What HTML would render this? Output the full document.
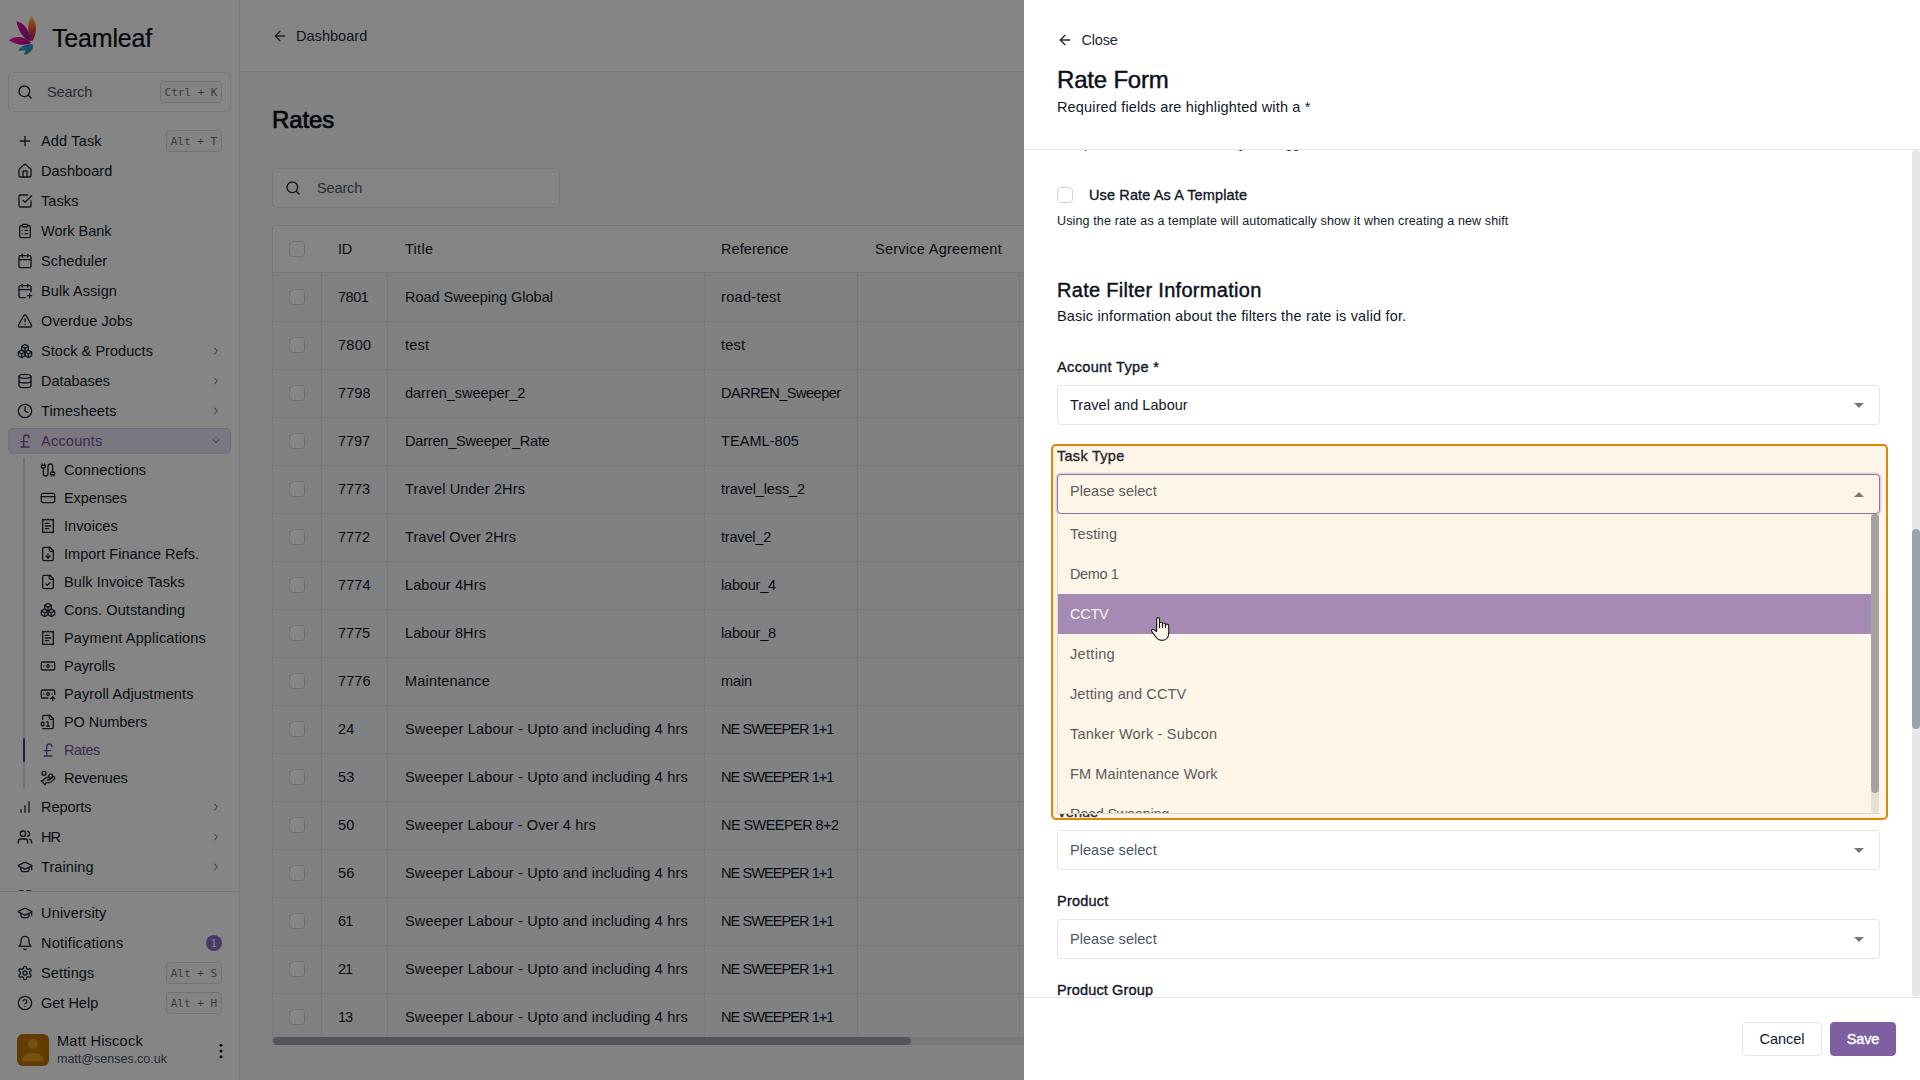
<!DOCTYPE html>
<html lang="en"><head><meta charset="utf-8"><title>Teamleaf - Rates</title>
<style>*{box-sizing:border-box;margin:0;padding:0}
html,body{width:1920px;height:1080px;overflow:hidden;background:#fff}
body{font-family:"Liberation Sans",sans-serif;font-size:14.500px;color:#111827;-webkit-font-smoothing:antialiased;letter-spacing:.16px}
#app{position:relative;width:1920px;height:1080px;overflow:hidden}
svg{display:block;flex:none}
/* sidebar */
#side{position:absolute;left:0;top:0;width:240px;height:1080px;background:#fefefe;border-right:1px solid #e5e7eb}
.brand{position:absolute;left:4px;top:10px;height:50px;display:flex;align-items:center}
.bname{margin-left:8px;font-size:25px;font-weight:400;color:#0b0f1a;position:relative;top:3px;-webkit-text-stroke:.2px #0b0f1a}
.sbox{position:absolute;left:8px;top:72px;width:223px;height:40px;border:1px solid #e5e7eb;border-radius:5px;background:#fdfdfd;display:flex;align-items:center;padding:0 8px 0 8px;color:#4b5563}
.sbox .sic{color:#111827}
.sph{margin-left:14px;flex:1;font-size:14.500px;color:#4b5563}
.kbd{font-family:"DejaVu Sans Mono","Liberation Mono",monospace;font-size:11px;color:#6b7280;border:1px solid #d8dbe0;border-radius:4px;background:#f9fafb;height:22px;line-height:21px;padding:0 3.500px;letter-spacing:0}
#nav{position:absolute;left:0;top:126px;width:239px;height:765px;overflow:hidden}
.ni{position:relative;height:30px;margin:0 8px;padding:0 9px 0 9px;display:flex;align-items:center;color:#111827;border-radius:5px}
.ni .ic{color:#1f2937}
.nl{margin-left:8px;flex:1;font-size:14.500px}
.ni .chev{color:#4b5563;margin-right:.500px}
.ni.act{height:26px;margin-top:2px;margin-bottom:1px;background:#e9e3f3;border:1px solid #d9cfea;color:#76509c;padding-left:8px;padding-right:8px}
.ni.act .ic,.ni.act .chev{color:#76509c}
.sub{position:relative;margin-left:24px;padding:1px 0 0 0;height:337px;margin-bottom:0}
.sub:before{content:"";position:absolute;left:-1px;top:3px;bottom:3px;width:2px;background:#dcd9e4}
.si{height:28px;display:flex;align-items:center;padding-left:16px;color:#111827;position:relative}
.si .ic{color:#1f2937}
.si>span{margin-left:8px}
.si.cur{color:#76509c}
.si.cur .ic{color:#76509c}
.si.cur:before{content:"";position:absolute;left:-1px;top:2px;width:2px;height:24px;background:#4c2a85;border-radius:1px;z-index:1}
#sbot{position:absolute;left:0;top:891px;width:239px;height:189px;border-top:1px solid #e2e4e8;padding-top:6px;background:#fefefe}
.badge{width:16px;height:16px;border-radius:50%;background:#8e6cc8;color:#fff;font-size:11px;line-height:16px;text-align:center;margin-right:0}
.user{position:absolute;left:17px;top:142px;display:flex;align-items:flex-start;width:214px}
.av{width:32px;height:32px;border-radius:6px;background:#b87000;overflow:hidden}
.ut{margin-left:8px;flex:1}
.un{font-size:14.500px;line-height:16px;color:#111827;margin-top:-1px}
.ue{font-size:12.500px;line-height:16px;color:#4b5563;margin-top:2px}
.dots{color:#111827;margin-right:2px;align-self:center}
/* main */
#main{position:absolute;left:240px;top:0;width:1680px;height:1080px;background:#f8f9fb}
.mhead{position:absolute;left:0;top:0;width:1680px;height:72px;border-bottom:1px solid #e5e7eb;display:flex;align-items:center;padding-left:32px;color:#374151;background:#fefefe}
.mhead>span{margin-left:8px;font-size:14.500px;color:#1f2937}
.ptitle{position:absolute;left:32px;top:105px;font-size:24px;line-height:30px;font-weight:400;-webkit-text-stroke:.7px #0b0f1a;color:#0b0f1a;letter-spacing:.2px}
.msearch{position:absolute;left:32px;top:168px;width:288px;height:40px;border:1px solid #e2e5ea;border-radius:5px;background:#fbfbfc;display:flex;align-items:center;padding-left:12px;color:#4b5563}
.msearch .ic{color:#1f2937}
.msearch>span{margin-left:16px}
.table{position:absolute;left:32px;top:225px;width:1500px;border:1px solid #e2e5ea;border-radius:3px 0 0 0;background:#f4f5f8}
.tr{display:flex;height:48px;border-bottom:1px solid #e2e5ea}
.tr.th{height:47px;background:#fefefe;border-radius:3px 0 0 0}
.tr.th+.tr{height:49px}
.c{display:flex;align-items:center;padding-left:17px;border-right:1px solid #e2e5ea;white-space:nowrap;font-size:14.500px;color:#111827}
.th .c{border-right-color:transparent}
.c0{width:49px;padding-left:16px}.c1{width:66px;padding-left:16px;letter-spacing:-.3px}.c2{width:317px}.c3{width:153px;padding-left:16px}.c4{width:162px}.c5{width:300px}
.cb{display:block;width:16px;height:16px;border:1px solid #d1d5db;border-radius:4px;background:#fff}
.hscroll{position:absolute;left:33px;top:1037px;width:800px;height:8px;background:#e5e7eb}
.hscroll i{display:block;width:638px;height:8px;border-radius:4px;background:#9ca3af}
#ov{z-index:5;position:absolute;left:0;top:0;width:1024px;height:1080px;background:rgba(0,0,0,.475)}
/* panel */
#panel{z-index:6;position:absolute;left:1024px;top:0;width:896px;height:1080px;background:#fff}
.phead{position:absolute;left:0;top:0;width:896px;height:150px;border-bottom:1px solid #e5e7eb;padding-left:33px}
.close{position:absolute;left:33px;top:31px;height:18px;display:flex;align-items:center;color:#1f2937}
.close>span{margin-left:8.400px;font-size:14.500px}
.phead h2{position:absolute;left:33px;top:65px;font-size:24px;line-height:30px;letter-spacing:0;font-weight:400;-webkit-text-stroke:.45px #0b0f1a;color:#0b0f1a}
.phead p{position:absolute;left:33px;top:98px;font-size:14.500px;line-height:18px;color:#111827}
.pbody{position:absolute;left:0;top:150px;width:896px;height:847px;overflow:hidden}
.pbody>*{position:absolute}
.clip{left:35px;top:-14px;font-size:13px;line-height:16px;color:#111827;letter-spacing:.15px}
.chk{left:33px;top:37px;display:flex;align-items:center}
.chk>span{margin-left:16px;font-weight:400;-webkit-text-stroke:.35px #111827;font-size:14.500px}
.desc{left:33px;top:63px;font-size:12.500px;line-height:16px;color:#111827}
.pbody h3{left:33px;top:127px;font-size:20px;line-height:26px;letter-spacing:.32px;font-weight:400;-webkit-text-stroke:.4px #0b0f1a;color:#0b0f1a}
.sdesc{left:33px;top:157px;font-size:14.500px;line-height:18px}
.lb{left:33px;font-weight:400;-webkit-text-stroke:.35px #111827;font-size:14.500px;line-height:18px;margin-top:-151px;white-space:nowrap}
.sel{left:33px;width:823px;height:40px;margin-top:-150px;border:1px solid #e2e5ea;border-radius:4px;background:#fff;display:flex;align-items:center;padding:0 15px 0 12px;color:#4b5563}
.sel>span{flex:1;font-size:14.500px}
.sel .v{color:#111827}
.ad{width:0;height:0;border:5px solid transparent;border-top:5px solid #777;border-bottom:0}
.au{width:0;height:0;border:5px solid transparent;border-bottom:5px solid #777;border-top:0}
.sel.open{border-color:#8b6bb5;box-shadow:0 0 0 1.500px rgba(139,107,181,.25)}
.dd{left:33px;top:364px;width:823px;height:300px;background:#fff;border:1px solid #dcdcdc;border-top:0;border-right:0;overflow:hidden}
.ddin{position:absolute;left:0;top:0;width:813px}
.opt{height:40px;line-height:40px;padding-left:12px;font-size:14.500px;color:#4b5563}
.opt.hl{background:#9d8ac5;color:#fff}
.ddtrack{position:absolute;right:1px;top:0;width:8px;height:299px;background:#e5e7eb;border-radius:0 0 4px 4px}
.ddtrack i{display:block;width:8px;height:279px;background:#9ca3af;border-radius:4px}
.hlbox{left:27px;top:294px;width:837px;height:376px;border:2px solid #e08600;border-radius:5px;background:rgba(240,160,30,.1)}
.vtrack{left:888px;top:0;width:8px;height:847px;background:#e5e7eb;border-radius:4px}
.vtrack i{display:block;margin-top:379px;width:8px;height:200px;background:#9ca3af;border-radius:4px}
.pfoot{position:absolute;left:0;top:997px;width:896px;height:83px;border-top:1px solid #e5e7eb;background:#fff}
.btn{position:absolute;top:24px;height:34px;line-height:32px;border:1px solid #e2e5ea;border-radius:4px;font-size:14.500px;text-align:center;color:#111827}
.btn{left:718px;width:80px}
.btn.pri{left:806px;width:66px;background:#7e5fa2;border-color:#7e5fa2;color:#fff;-webkit-text-stroke:.35px #fff}
.cursor{position:absolute;left:116px;top:605px}

.tr+.tr+.tr .c>*{position:relative;top:-1px}
.sel.open>span{position:relative;top:-3px}
.ni .kbd{padding:0 4px}
</style></head><body>
<div id="app">
<aside id="side">
 <div class="brand"><svg class="logo" width="40" height="50" viewBox="4 10 40 50">
  <defs><linearGradient id="g1" x1="0" y1="0" x2="0" y2="1"><stop offset="0" stop-color="#ffd83a"/><stop offset=".45" stop-color="#ee5a2a"/><stop offset="1" stop-color="#c00c5c"/></linearGradient>
  <linearGradient id="g2" x1="0" y1="0" x2="1" y2="1"><stop offset="0" stop-color="#f0069c"/><stop offset="1" stop-color="#7a1c8c"/></linearGradient>
  <linearGradient id="g3" x1="0" y1="0" x2="1" y2="0"><stop offset="0" stop-color="#ff14b4"/><stop offset="1" stop-color="#a80478"/></linearGradient>
  <linearGradient id="g4" x1="0" y1="1" x2="1" y2="0"><stop offset="0" stop-color="#1cb4e4"/><stop offset="1" stop-color="#2c6cc4"/></linearGradient>
  <linearGradient id="g5" x1="0" y1="1" x2="1" y2="0"><stop offset="0" stop-color="#0ea486"/><stop offset="1" stop-color="#2494cc"/></linearGradient></defs>
  <path d="M31.500 16C27.300 22 26.800 33 32 41.500 37.200 34 37.700 24 31.500 16Z" fill="url(#g1)"/>
  <path d="M16.500 21.300C23.500 22.300 29.500 30 31.300 41.500 24 39.700 18.300 31.500 16.500 21.300Z" fill="url(#g2)"/>
  <path d="M9.100 40.300C15 35.300 24.500 35.800 31.300 43 25 45.800 15.500 45.300 9.100 40.300Z" fill="url(#g3)"/>
  <path d="M17.900 50.500C21 46 27 43.800 32.200 44.200 30.500 48.700 25 51.700 17.900 50.500Z" fill="url(#g4)"/>
  <path d="M24.100 54.700C25 50 28.500 46 32.700 44.500 34.200 48.200 31 53.700 24.100 54.700Z" fill="url(#g5)"/>
  <path d="M31.800 41 27 29M31 42.800 18 40M31.600 44.600 22 49M32.300 45 27 52" stroke="#fff" stroke-opacity=".35" stroke-width=".4" fill="none"/>
 </svg><span class="bname"><span style="letter-spacing:-0.180px">Teamleaf</span></span></div>
 <div class="sbox"><svg class="ic sic" width="16" height="16" viewBox="0 0 24 24" fill="none" stroke="currentColor" stroke-width="2" stroke-linecap="round" stroke-linejoin="round" ><circle cx="11" cy="11" r="8"/><path d="m21 21-4.300-4.300"/></svg><span class="sph"><span style="letter-spacing:-0.141px">Search</span></span><span class="kbd">Ctrl + K</span></div>
 <nav id="nav"><div class="ni "><svg class="ic" width="16" height="16" viewBox="0 0 24 24" fill="none" stroke="currentColor" stroke-width="2" stroke-linecap="round" stroke-linejoin="round" ><path d="M5 12h14"/><path d="M12 5v14"/></svg><span class="nl"><span style="letter-spacing:0.171px">Add Task</span></span><span class="kbd">Alt + T</span></div><div class="ni "><svg class="ic" width="16" height="16" viewBox="0 0 24 24" fill="none" stroke="currentColor" stroke-width="2" stroke-linecap="round" stroke-linejoin="round" ><path d="M15 21v-8a1 1 0 0 0-1-1h-4a1 1 0 0 0-1 1v8"/><path d="M3 10a2 2 0 0 1 .709-1.528l7-5.999a2 2 0 0 1 2.582 0l7 5.999A2 2 0 0 1 21 10v9a2 2 0 0 1-2 2H5a2 2 0 0 1-2-2z"/></svg><span class="nl"><span style="letter-spacing:0.035px">Dashboard</span></span></div><div class="ni "><svg class="ic" width="16" height="16" viewBox="0 0 24 24" fill="none" stroke="currentColor" stroke-width="2" stroke-linecap="round" stroke-linejoin="round" ><path d="m9 11 3 3L22 4"/><path d="M21 12v7a2 2 0 0 1-2 2H5a2 2 0 0 1-2-2V5a2 2 0 0 1 2-2h11"/></svg><span class="nl"><span style="letter-spacing:0.087px">Tasks</span></span></div><div class="ni "><svg class="ic" width="16" height="16" viewBox="0 0 24 24" fill="none" stroke="currentColor" stroke-width="2" stroke-linecap="round" stroke-linejoin="round" ><rect width="8" height="4" x="8" y="2" rx="1" ry="1"/><path d="M16 4h2a2 2 0 0 1 2 2v14a2 2 0 0 1-2 2H6a2 2 0 0 1-2-2V6a2 2 0 0 1 2-2h2"/><path d="M12 11h4"/><path d="M12 16h4"/><path d="M8 11h.01"/><path d="M8 16h.01"/></svg><span class="nl"><span style="letter-spacing:-0.016px">Work Bank</span></span></div><div class="ni "><svg class="ic" width="16" height="16" viewBox="0 0 24 24" fill="none" stroke="currentColor" stroke-width="2" stroke-linecap="round" stroke-linejoin="round" ><path d="M8 2v4"/><path d="M16 2v4"/><rect width="18" height="18" x="3" y="4" rx="2"/><path d="M3 10h18"/></svg><span class="nl"><span style="letter-spacing:0.106px">Scheduler</span></span></div><div class="ni "><svg class="ic" width="16" height="16" viewBox="0 0 24 24" fill="none" stroke="currentColor" stroke-width="2" stroke-linecap="round" stroke-linejoin="round" ><path d="M8 2v4"/><path d="M16 2v4"/><path d="M21 13V6a2 2 0 0 0-2-2H5a2 2 0 0 0-2 2v14a2 2 0 0 0 2 2h8"/><path d="M3 10h18"/><path d="M16 19h6"/><path d="M19 16v6"/></svg><span class="nl"><span style="letter-spacing:0.095px">Bulk Assign</span></span></div><div class="ni "><svg class="ic" width="16" height="16" viewBox="0 0 24 24" fill="none" stroke="currentColor" stroke-width="2" stroke-linecap="round" stroke-linejoin="round" ><path d="m21.73 18-8-14a2 2 0 0 0-3.48 0l-8 14A2 2 0 0 0 4 21h16a2 2 0 0 0 1.73-3"/><path d="M12 9v4"/><path d="M12 17h.01"/></svg><span class="nl"><span style="letter-spacing:0.102px">Overdue Jobs</span></span></div><div class="ni "><svg class="ic" width="16" height="16" viewBox="0 0 24 24" fill="none" stroke="currentColor" stroke-width="2" stroke-linecap="round" stroke-linejoin="round" ><path d="M2.970 12.920A2 2 0 0 0 2 14.630v3.240a2 2 0 0 0 .970 1.710l3 1.800a2 2 0 0 0 2.060 0L12 19v-5.500l-5-3-4.030 2.420Z"/><path d="m7 16.500-4.740-2.850"/><path d="m7 16.500 5-3"/><path d="M7 16.500v5.170"/><path d="M12 13.500V19l3.970 2.380a2 2 0 0 0 2.060 0l3-1.800a2 2 0 0 0 .970-1.710v-3.240a2 2 0 0 0-.970-1.710L17 10.500l-5 3Z"/><path d="m17 16.500-5-3"/><path d="m17 16.500 4.740-2.850"/><path d="M17 16.500v5.170"/><path d="M7.970 4.420A2 2 0 0 0 7 6.130v4.370l5 3 5-3V6.130a2 2 0 0 0-.970-1.710l-3-1.800a2 2 0 0 0-2.060 0l-3 1.800Z"/><path d="M12 8 7.260 5.150"/><path d="m12 8 4.740-2.850"/><path d="M12 13.500V8"/></svg><span class="nl"><span style="letter-spacing:0.049px">Stock &amp; Products</span></span><svg class="chev" width="12" height="12" viewBox="0 0 24 24" fill="none" stroke="currentColor" stroke-width="2" stroke-linecap="round" stroke-linejoin="round" ><path d="m9 18 6-6-6-6"/></svg></div><div class="ni "><svg class="ic" width="16" height="16" viewBox="0 0 24 24" fill="none" stroke="currentColor" stroke-width="2" stroke-linecap="round" stroke-linejoin="round" ><ellipse cx="12" cy="5" rx="9" ry="3"/><path d="M3 5V19A9 3 0 0 0 21 19V5"/><path d="M3 12A9 3 0 0 0 21 12"/></svg><span class="nl"><span style="letter-spacing:-0.036px">Databases</span></span><svg class="chev" width="12" height="12" viewBox="0 0 24 24" fill="none" stroke="currentColor" stroke-width="2" stroke-linecap="round" stroke-linejoin="round" ><path d="m9 18 6-6-6-6"/></svg></div><div class="ni "><svg class="ic" width="16" height="16" viewBox="0 0 24 24" fill="none" stroke="currentColor" stroke-width="2" stroke-linecap="round" stroke-linejoin="round" ><circle cx="12" cy="12" r="10"/><polyline points="12 6 12 12 16 14"/></svg><span class="nl"><span style="letter-spacing:0.110px">Timesheets</span></span><svg class="chev" width="12" height="12" viewBox="0 0 24 24" fill="none" stroke="currentColor" stroke-width="2" stroke-linecap="round" stroke-linejoin="round" ><path d="m9 18 6-6-6-6"/></svg></div><div class="ni act"><svg class="ic" width="16" height="16" viewBox="0 0 24 24" fill="none" stroke="currentColor" stroke-width="2" stroke-linecap="round" stroke-linejoin="round" ><path d="M18 7c0-5.333-8-5.333-8 0"/><path d="M10 7v14"/><path d="M6 21h12"/><path d="M6 13h10"/></svg><span class="nl"><span style="letter-spacing:0.232px">Accounts</span></span><svg class="chev" width="12" height="12" viewBox="0 0 24 24" fill="none" stroke="currentColor" stroke-width="2" stroke-linecap="round" stroke-linejoin="round" ><path d="m6 9 6 6 6-6"/></svg></div><div class="sub"><div class="si"><svg class="ic" width="16" height="16" viewBox="0 0 24 24" fill="none" stroke="currentColor" stroke-width="2" stroke-linecap="round" stroke-linejoin="round" ><path d="M17 21v-2a1 1 0 0 1-1-1v-1a2 2 0 0 1 2-2h2a2 2 0 0 1 2 2v1a1 1 0 0 1-1 1"/><path d="M19 15V6.500a1 1 0 0 0-7 0v11a1 1 0 0 1-7 0V9"/><path d="M21 21v-2h-4"/><path d="M3 5h4V3"/><path d="M7 5a1 1 0 0 1 1 1v1a2 2 0 0 1-2 2H4a2 2 0 0 1-2-2V6a1 1 0 0 1 1-1V3"/></svg><span style="letter-spacing:0.149px">Connections</span></div><div class="si"><svg class="ic" width="16" height="16" viewBox="0 0 24 24" fill="none" stroke="currentColor" stroke-width="2" stroke-linecap="round" stroke-linejoin="round" ><rect width="20" height="14" x="2" y="5" rx="2"/><line x1="2" x2="22" y1="10" y2="10"/></svg><span style="letter-spacing:-0.085px">Expenses</span></div><div class="si"><svg class="ic" width="16" height="16" viewBox="0 0 24 24" fill="none" stroke="currentColor" stroke-width="2" stroke-linecap="round" stroke-linejoin="round" ><path d="M4 2v20l2-1 2 1 2-1 2 1 2-1 2 1 2-1 2 1V2l-2 1-2-1-2 1-2-1-2 1-2-1-2 1Z"/><path d="M14 8H8"/><path d="M16 12H8"/><path d="M13 16H8"/></svg><span style="letter-spacing:0.070px">Invoices</span></div><div class="si"><svg class="ic" width="16" height="16" viewBox="0 0 24 24" fill="none" stroke="currentColor" stroke-width="2" stroke-linecap="round" stroke-linejoin="round" ><path d="M15 2H6a2 2 0 0 0-2 2v16a2 2 0 0 0 2 2h12a2 2 0 0 0 2-2V7Z"/><path d="M14 2v4a2 2 0 0 0 2 2h4"/><path d="M12 18v-6"/><path d="m9 15 3 3 3-3"/></svg><span style="letter-spacing:0.021px">Import Finance Refs.</span></div><div class="si"><svg class="ic" width="16" height="16" viewBox="0 0 24 24" fill="none" stroke="currentColor" stroke-width="2" stroke-linecap="round" stroke-linejoin="round" ><path d="M15 2H6a2 2 0 0 0-2 2v16a2 2 0 0 0 2 2h12a2 2 0 0 0 2-2V7Z"/><path d="M14 2v4a2 2 0 0 0 2 2h4"/><path d="m9 15 2 2 4-4"/></svg><span style="letter-spacing:0.097px">Bulk Invoice Tasks</span></div><div class="si"><svg class="ic" width="16" height="16" viewBox="0 0 24 24" fill="none" stroke="currentColor" stroke-width="2" stroke-linecap="round" stroke-linejoin="round" ><path d="M2.970 12.920A2 2 0 0 0 2 14.630v3.240a2 2 0 0 0 .970 1.710l3 1.800a2 2 0 0 0 2.060 0L12 19v-5.500l-5-3-4.030 2.420Z"/><path d="m7 16.500-4.740-2.850"/><path d="m7 16.500 5-3"/><path d="M7 16.500v5.170"/><path d="M12 13.500V19l3.970 2.380a2 2 0 0 0 2.060 0l3-1.800a2 2 0 0 0 .970-1.710v-3.240a2 2 0 0 0-.970-1.710L17 10.500l-5 3Z"/><path d="m17 16.500-5-3"/><path d="m17 16.500 4.740-2.850"/><path d="M17 16.500v5.170"/><path d="M7.970 4.420A2 2 0 0 0 7 6.130v4.370l5 3 5-3V6.130a2 2 0 0 0-.970-1.710l-3-1.800a2 2 0 0 0-2.060 0l-3 1.800Z"/><path d="M12 8 7.260 5.150"/><path d="m12 8 4.740-2.850"/><path d="M12 13.500V8"/></svg><span style="letter-spacing:0.068px">Cons. Outstanding</span></div><div class="si"><svg class="ic" width="16" height="16" viewBox="0 0 24 24" fill="none" stroke="currentColor" stroke-width="2" stroke-linecap="round" stroke-linejoin="round" ><path d="M4 2v20l2-1 2 1 2-1 2 1 2-1 2 1 2-1 2 1V2l-2 1-2-1-2 1-2-1-2 1-2-1-2 1Z"/><path d="M14 8H8"/><path d="M16 12H8"/><path d="M13 16H8"/></svg><span style="letter-spacing:0.168px">Payment Applications</span></div><div class="si"><svg class="ic" width="16" height="16" viewBox="0 0 24 24" fill="none" stroke="currentColor" stroke-width="2" stroke-linecap="round" stroke-linejoin="round" ><rect width="20" height="12" x="2" y="6" rx="2"/><circle cx="12" cy="12" r="2"/><path d="M6 12h.01M18 12h.01"/></svg><span style="letter-spacing:-0.040px">Payrolls</span></div><div class="si"><svg class="ic" width="16" height="16" viewBox="0 0 24 24" fill="none" stroke="currentColor" stroke-width="2" stroke-linecap="round" stroke-linejoin="round" ><path d="M12 18H4a2 2 0 0 1-2-2V8a2 2 0 0 1 2-2h16a2 2 0 0 1 2 2v5"/><path d="M18 12h.01"/><path d="M19 22v-6"/><path d="m22 19-3-3-3 3"/><path d="M6 12h.01"/><circle cx="12" cy="12" r="2"/></svg><span style="letter-spacing:0.114px">Payroll Adjustments</span></div><div class="si"><svg class="ic" width="16" height="16" viewBox="0 0 24 24" fill="none" stroke="currentColor" stroke-width="2" stroke-linecap="round" stroke-linejoin="round" ><path d="M4 22h14a2 2 0 0 0 2-2V7l-5-5H6a2 2 0 0 0-2 2v4"/><path d="M14 2v4a2 2 0 0 0 2 2h4"/><rect width="4" height="6" x="2" y="12" rx="2"/><path d="M10 12h2v6"/><path d="M10 18h4"/></svg><span style="letter-spacing:-0.055px">PO Numbers</span></div><div class="si cur"><svg class="ic" width="16" height="16" viewBox="0 0 24 24" fill="none" stroke="currentColor" stroke-width="2" stroke-linecap="round" stroke-linejoin="round" ><path d="M18 7c0-5.333-8-5.333-8 0"/><path d="M10 7v14"/><path d="M6 21h12"/><path d="M6 13h10"/></svg><span style="letter-spacing:-0.376px">Rates</span></div><div class="si"><svg class="ic" width="16" height="16" viewBox="0 0 24 24" fill="none" stroke="currentColor" stroke-width="2" stroke-linecap="round" stroke-linejoin="round" ><path d="M11 15h2a2 2 0 1 0 0-4h-3c-.6 0-1.100.2-1.400.6L3 17"/><path d="m7 21 1.600-1.400c.3-.4.800-.6 1.400-.6h4c1.100 0 2.100-.4 2.800-1.200l4.600-4.400a2 2 0 0 0-2.750-2.910l-4.200 3.900"/><path d="m2 16 6 6"/><circle cx="16" cy="9" r="2.900"/><circle cx="6" cy="5" r="3"/></svg><span style="letter-spacing:-0.224px">Revenues</span></div></div><div class="ni "><svg class="ic" width="16" height="16" viewBox="0 0 24 24" fill="none" stroke="currentColor" stroke-width="2" stroke-linecap="round" stroke-linejoin="round" ><line x1="12" x2="12" y1="20" y2="10"/><line x1="18" x2="18" y1="20" y2="4"/><line x1="6" x2="6" y1="20" y2="16"/></svg><span class="nl"><span style="letter-spacing:-0.039px">Reports</span></span><svg class="chev" width="12" height="12" viewBox="0 0 24 24" fill="none" stroke="currentColor" stroke-width="2" stroke-linecap="round" stroke-linejoin="round" ><path d="m9 18 6-6-6-6"/></svg></div><div class="ni "><svg class="ic" width="16" height="16" viewBox="0 0 24 24" fill="none" stroke="currentColor" stroke-width="2" stroke-linecap="round" stroke-linejoin="round" ><path d="M16 21v-2a4 4 0 0 0-4-4H6a4 4 0 0 0-4 4v2"/><circle cx="9" cy="7" r="4"/><path d="M22 21v-2a4 4 0 0 0-3-3.870"/><path d="M16 3.130a4 4 0 0 1 0 7.750"/></svg><span class="nl"><span style="letter-spacing:-0.971px">HR</span></span><svg class="chev" width="12" height="12" viewBox="0 0 24 24" fill="none" stroke="currentColor" stroke-width="2" stroke-linecap="round" stroke-linejoin="round" ><path d="m9 18 6-6-6-6"/></svg></div><div class="ni "><svg class="ic" width="16" height="16" viewBox="0 0 24 24" fill="none" stroke="currentColor" stroke-width="2" stroke-linecap="round" stroke-linejoin="round" ><path d="M21.420 10.922a1 1 0 0 0-.019-1.838L12.830 5.180a2 2 0 0 0-1.660 0L2.600 9.080a1 1 0 0 0 0 1.832l8.570 3.908a2 2 0 0 0 1.660 0z"/><path d="M22 10v6"/><path d="M6 12.500V16a6 3 0 0 0 12 0v-3.500"/></svg><span class="nl"><span style="letter-spacing:0.094px">Training</span></span><svg class="chev" width="12" height="12" viewBox="0 0 24 24" fill="none" stroke="currentColor" stroke-width="2" stroke-linecap="round" stroke-linejoin="round" ><path d="m9 18 6-6-6-6"/></svg></div><div class="ni "><svg class="ic" width="16" height="16" viewBox="0 0 24 24" fill="none" stroke="currentColor" stroke-width="2" stroke-linecap="round" stroke-linejoin="round" ><rect width="7" height="7" x="3" y="3" rx="1"/><rect width="7" height="7" x="14" y="3" rx="1"/><rect width="7" height="7" x="14" y="14" rx="1"/><rect width="7" height="7" x="3" y="14" rx="1"/></svg><span class="nl">Assets</span><svg class="chev" width="12" height="12" viewBox="0 0 24 24" fill="none" stroke="currentColor" stroke-width="2" stroke-linecap="round" stroke-linejoin="round" ><path d="m9 18 6-6-6-6"/></svg></div></nav>
 <div id="sbot">
  <div class="ni "><svg class="ic" width="16" height="16" viewBox="0 0 24 24" fill="none" stroke="currentColor" stroke-width="2" stroke-linecap="round" stroke-linejoin="round" ><path d="M21.420 10.922a1 1 0 0 0-.019-1.838L12.830 5.180a2 2 0 0 0-1.660 0L2.600 9.080a1 1 0 0 0 0 1.832l8.570 3.908a2 2 0 0 0 1.660 0z"/><path d="M22 10v6"/><path d="M6 12.500V16a6 3 0 0 0 12 0v-3.500"/></svg><span class="nl"><span style="letter-spacing:0.185px">University</span></span></div>
  <div class="ni"><svg class="ic" width="16" height="16" viewBox="0 0 24 24" fill="none" stroke="currentColor" stroke-width="2" stroke-linecap="round" stroke-linejoin="round" ><path d="M6 8a6 6 0 0 1 12 0c0 7 3 9 3 9H3s3-2 3-9"/><path d="M10.300 21a1.940 1.940 0 0 0 3.400 0"/></svg><span class="nl"><span style="letter-spacing:0.263px">Notifications</span></span><span class="badge">1</span></div>
  <div class="ni "><svg class="ic" width="16" height="16" viewBox="0 0 24 24" fill="none" stroke="currentColor" stroke-width="2" stroke-linecap="round" stroke-linejoin="round" ><path d="M12.220 2h-.440a2 2 0 0 0-2 2v.180a2 2 0 0 1-1 1.730l-.430.250a2 2 0 0 1-2 0l-.150-.080a2 2 0 0 0-2.730.730l-.220.380a2 2 0 0 0 .730 2.730l.150.100a2 2 0 0 1 1 1.720v.510a2 2 0 0 1-1 1.740l-.150.090a2 2 0 0 0-.730 2.730l.220.380a2 2 0 0 0 2.730.730l.150-.080a2 2 0 0 1 2 0l.430.250a2 2 0 0 1 1 1.730V20a2 2 0 0 0 2 2h.440a2 2 0 0 0 2-2v-.180a2 2 0 0 1 1-1.730l.430-.250a2 2 0 0 1 2 0l.150.080a2 2 0 0 0 2.730-.730l.220-.390a2 2 0 0 0-.730-2.730l-.150-.080a2 2 0 0 1-1-1.740v-.500a2 2 0 0 1 1-1.740l.150-.090a2 2 0 0 0 .730-2.730l-.220-.380a2 2 0 0 0-2.730-.730l-.150.080a2 2 0 0 1-2 0l-.430-.250a2 2 0 0 1-1-1.730V4a2 2 0 0 0-2-2z"/><circle cx="12" cy="12" r="3"/></svg><span class="nl"><span style="letter-spacing:0.126px">Settings</span></span><span class="kbd">Alt + S</span></div>
  <div class="ni "><svg class="ic" width="16" height="16" viewBox="0 0 24 24" fill="none" stroke="currentColor" stroke-width="2" stroke-linecap="round" stroke-linejoin="round" ><circle cx="12" cy="12" r="10"/><path d="M9.090 9a3 3 0 0 1 5.830 1c0 2-3 3-3 3"/><path d="M12 17h.01"/></svg><span class="nl"><span style="letter-spacing:-0.003px">Get Help</span></span><span class="kbd">Alt + H</span></div>
  <div class="user"><div class="av"><svg width="32" height="32" viewBox="0 0 32 32" fill="#e09a18"><circle cx="16" cy="10" r="5"/><path d="M5.200 27.200c0-5 4.500-8.400 10.800-8.400s10.800 3.400 10.800 8.400z"/></svg></div>
   <div class="ut"><div class="un"><span style="letter-spacing:0.243px">Matt Hiscock</span></div><div class="ue"><span style="letter-spacing:0.003px">matt@senses.co.uk</span></div></div>
   <svg class="dots" width="16" height="16" viewBox="0 0 16 16" fill="currentColor"><circle cx="8" cy="2.300" r="1.500"/><circle cx="8" cy="8" r="1.500"/><circle cx="8" cy="13.700" r="1.500"/></svg></div>
 </div>
</aside>
<main id="main">
 <div class="mhead"><svg class="ic" width="16" height="16" viewBox="0 0 24 24" fill="none" stroke="currentColor" stroke-width="2" stroke-linecap="round" stroke-linejoin="round" ><path d="m12 19-7-7 7-7"/><path d="M19 12H5"/></svg><span><span style="letter-spacing:0.035px">Dashboard</span></span></div>
 <h1 class="ptitle"><span style="letter-spacing:-0.139px">Rates</span></h1>
 <div class="msearch"><svg class="ic" width="16" height="16" viewBox="0 0 24 24" fill="none" stroke="currentColor" stroke-width="2" stroke-linecap="round" stroke-linejoin="round" ><circle cx="11" cy="11" r="8"/><path d="m21 21-4.300-4.300"/></svg><span><span style="letter-spacing:-0.141px">Search</span></span></div>
 <div class="table">
  <div class="tr th"><div class="c c0"><i class="cb"></i></div><div class="c c1"><span style="letter-spacing:-0.375px">ID</span></div><div class="c c2"><span style="letter-spacing:0.289px">Title</span></div><div class="c c3"><span style="letter-spacing:0.067px">Reference</span></div><div class="c c4"><span style="letter-spacing:0.264px">Service Agreement</span></div><div class="c c5"></div></div>
  <div class="tr"><div class="c c0"><i class="cb"></i></div><div class="c c1"><span style="letter-spacing:-0.464px">7801</span></div><div class="c c2"><span style="letter-spacing:-0.021px">Road Sweeping Global</span></div><div class="c c3"><span style="letter-spacing:0.309px">road-test</span></div><div class="c c4"></div><div class="c c5"></div></div><div class="tr"><div class="c c0"><i class="cb"></i></div><div class="c c1"><span style="letter-spacing:0.261px">7800</span></div><div class="c c2"><span style="letter-spacing:0.207px">test</span></div><div class="c c3"><span style="letter-spacing:0.207px">test</span></div><div class="c c4"></div><div class="c c5"></div></div><div class="tr"><div class="c c0"><i class="cb"></i></div><div class="c c1"><span style="letter-spacing:0.061px">7798</span></div><div class="c c2"><span style="letter-spacing:-0.032px">darren_sweeper_2</span></div><div class="c c3"><span style="letter-spacing:-0.494px">DARREN_Sweeper</span></div><div class="c c4"></div><div class="c c5"></div></div><div class="tr"><div class="c c0"><i class="cb"></i></div><div class="c c1"><span style="letter-spacing:-0.064px">7797</span></div><div class="c c2"><span style="letter-spacing:-0.195px">Darren_Sweeper_Rate</span></div><div class="c c3"><span style="letter-spacing:0.059px">TEAML-805</span></div><div class="c c4"></div><div class="c c5"></div></div><div class="tr"><div class="c c0"><i class="cb"></i></div><div class="c c1"><span style="letter-spacing:-0.064px">7773</span></div><div class="c c2"><span style="letter-spacing:0.123px">Travel Under 2Hrs</span></div><div class="c c3"><span style="letter-spacing:-0.110px">travel_less_2</span></div><div class="c c4"></div><div class="c c5"></div></div><div class="tr"><div class="c c0"><i class="cb"></i></div><div class="c c1"><span style="letter-spacing:-0.064px">7772</span></div><div class="c c2"><span style="letter-spacing:0.072px">Travel Over 2Hrs</span></div><div class="c c3"><span style="letter-spacing:-0.198px">travel_2</span></div><div class="c c4"></div><div class="c c5"></div></div><div class="tr"><div class="c c0"><i class="cb"></i></div><div class="c c1"><span style="letter-spacing:0.061px">7774</span></div><div class="c c2"><span style="letter-spacing:0.110px">Labour 4Hrs</span></div><div class="c c3"><span style="letter-spacing:-0.179px">labour_4</span></div><div class="c c4"></div><div class="c c5"></div></div><div class="tr"><div class="c c0"><i class="cb"></i></div><div class="c c1"><span style="letter-spacing:-0.064px">7775</span></div><div class="c c2"><span style="letter-spacing:0.110px">Labour 8Hrs</span></div><div class="c c3"><span style="letter-spacing:-0.179px">labour_8</span></div><div class="c c4"></div><div class="c c5"></div></div><div class="tr"><div class="c c0"><i class="cb"></i></div><div class="c c1"><span style="letter-spacing:0.061px">7776</span></div><div class="c c2"><span style="letter-spacing:0.179px">Maintenance</span></div><div class="c c3"><span style="letter-spacing:-0.107px">main</span></div><div class="c c4"></div><div class="c c5"></div></div><div class="tr"><div class="c c0"><i class="cb"></i></div><div class="c c1"><span style="letter-spacing:0.186px">24</span></div><div class="c c2"><span style="letter-spacing:0.176px">Sweeper Labour - Upto and including 4 hrs</span></div><div class="c c3"><span style="letter-spacing:-0.915px">NE SWEEPER 1+1</span></div><div class="c c4"></div><div class="c c5"></div></div><div class="tr"><div class="c c0"><i class="cb"></i></div><div class="c c1"><span style="letter-spacing:0.186px">53</span></div><div class="c c2"><span style="letter-spacing:0.176px">Sweeper Labour - Upto and including 4 hrs</span></div><div class="c c3"><span style="letter-spacing:-0.915px">NE SWEEPER 1+1</span></div><div class="c c4"></div><div class="c c5"></div></div><div class="tr"><div class="c c0"><i class="cb"></i></div><div class="c c1"><span style="letter-spacing:0.186px">50</span></div><div class="c c2"><span style="letter-spacing:0.142px">Sweeper Labour - Over 4 hrs</span></div><div class="c c3"><span style="letter-spacing:-0.558px">NE SWEEPER 8+2</span></div><div class="c c4"></div><div class="c c5"></div></div><div class="tr"><div class="c c0"><i class="cb"></i></div><div class="c c1"><span style="letter-spacing:0.186px">56</span></div><div class="c c2"><span style="letter-spacing:0.176px">Sweeper Labour - Upto and including 4 hrs</span></div><div class="c c3"><span style="letter-spacing:-0.915px">NE SWEEPER 1+1</span></div><div class="c c4"></div><div class="c c5"></div></div><div class="tr"><div class="c c0"><i class="cb"></i></div><div class="c c1"><span style="letter-spacing:-0.814px">61</span></div><div class="c c2"><span style="letter-spacing:0.176px">Sweeper Labour - Upto and including 4 hrs</span></div><div class="c c3"><span style="letter-spacing:-0.915px">NE SWEEPER 1+1</span></div><div class="c c4"></div><div class="c c5"></div></div><div class="tr"><div class="c c0"><i class="cb"></i></div><div class="c c1"><span style="letter-spacing:-1.064px">21</span></div><div class="c c2"><span style="letter-spacing:0.176px">Sweeper Labour - Upto and including 4 hrs</span></div><div class="c c3"><span style="letter-spacing:-0.915px">NE SWEEPER 1+1</span></div><div class="c c4"></div><div class="c c5"></div></div><div class="tr"><div class="c c0"><i class="cb"></i></div><div class="c c1"><span style="letter-spacing:-1.064px">13</span></div><div class="c c2"><span style="letter-spacing:0.176px">Sweeper Labour - Upto and including 4 hrs</span></div><div class="c c3"><span style="letter-spacing:-0.915px">NE SWEEPER 1+1</span></div><div class="c c4"></div><div class="c c5"></div></div>
 </div>
 <div class="hscroll"><i></i></div>
</main>
<div id="ov"></div>
<section id="panel">
 <div class="phead">
  <div class="close"><svg class="ic" width="16" height="16" viewBox="0 0 24 24" fill="none" stroke="currentColor" stroke-width="2" stroke-linecap="round" stroke-linejoin="round" ><path d="m12 19-7-7 7-7"/><path d="M19 12H5"/></svg><span><span style="letter-spacing:-0.134px">Close</span></span></div>
  <h2><span style="letter-spacing:-0.195px">Rate Form</span></h2>
  <p><span style="letter-spacing:0.151px">Required fields are highlighted with a *</span></p>
 </div>
 <div class="pbody">
  <p class="clip">Template rates are used on any site trigger</p>
  <div class="chk"><i class="cb"></i><span><span style="letter-spacing:0.127px">Use Rate As A Template</span></span></div>
  <p class="desc"><span style="letter-spacing:0.135px">Using the rate as a template will automatically show it when creating a new shift</span></p>
  <h3><span style="letter-spacing:0.293px">Rate Filter Information</span></h3>
  <p class="sdesc"><span style="letter-spacing:0.158px">Basic information about the filters the rate is valid for.</span></p>
  <label class="lb" style="top:359px"><span style="letter-spacing:0.352px">Account Type *</span></label>
  <div class="sel" style="top:385px"><span class="v"><span style="letter-spacing:0.032px">Travel and Labour</span></span><b class="ad"></b></div>
  <label class="lb" style="top:448px"><span style="letter-spacing:0.276px">Task Type</span></label>
  <div class="sel open" style="top:474px"><span><span style="letter-spacing:0.035px">Please select</span></span><b class="au"></b></div>
  <label class="lb" style="top:804px"><span style="letter-spacing:-0.026px">Venue</span></label>
  <div class="sel" style="top:830px"><span><span style="letter-spacing:0.035px">Please select</span></span><b class="ad"></b></div>
  <label class="lb" style="top:893px"><span style="letter-spacing:0.233px">Product</span></label>
  <div class="sel" style="top:919px"><span><span style="letter-spacing:0.035px">Please select</span></span><b class="ad"></b></div>
  <label class="lb" style="top:982px"><span style="letter-spacing:0.138px">Product Group</span></label>
  <div class="dd"><div class="ddin"><div class="opt"><span style="letter-spacing:0.194px">Testing</span></div><div class="opt"><span style="letter-spacing:-0.412px">Demo 1</span></div><div class="opt hl"><span style="letter-spacing:-0.268px">CCTV</span></div><div class="opt"><span style="letter-spacing:0.326px">Jetting</span></div><div class="opt"><span style="letter-spacing:0.116px">Jetting and CCTV</span></div><div class="opt"><span style="letter-spacing:0.201px">Tanker Work - Subcon</span></div><div class="opt"><span style="letter-spacing:0.111px">FM Maintenance Work</span></div><div class="opt"><span style="letter-spacing:-0.260px">Road Sweeping</span></div></div><div class="ddtrack"><i></i></div></div>
  <div class="hlbox"></div>
  <div class="vtrack"><i></i></div>
 </div>
 <div class="pfoot"><span class="btn"><span style="letter-spacing:-0.023px">Cancel</span></span><span class="btn pri"><span style="letter-spacing:-0.188px">Save</span></span></div>
 <svg class="cursor" width="40" height="45" viewBox="1140 605 40 45" fill="#fdf5e8" stroke="#1d1a1a" stroke-width="1.150" stroke-linejoin="round" stroke-linecap="round"><path d="M1156.600 631.400V619Q1156.600 617.600 1158.050 617.600Q1159.500 617.600 1159.500 619V623Q1159.600 622.200 1161 622.200Q1162.400 622.200 1162.500 623.400Q1162.600 623.200 1164 623.200Q1165.400 623.200 1165.500 624.400Q1165.600 624.100 1167 624.100Q1168.700 624.100 1168.700 626V633.500C1168.700 638 1165.500 640.400 1161.500 640.400C1158.500 640.400 1156.500 638 1154.800 635.500L1152 631.800Q1151 630.300 1152.300 629.500Q1153.400 628.900 1154.500 630Z"/><path d="M1159.500 622.500V627.600M1162.500 623.400V627.600M1165.500 624.400V627.600" fill="none"/></svg>
</section>
</div>
</body></html>
